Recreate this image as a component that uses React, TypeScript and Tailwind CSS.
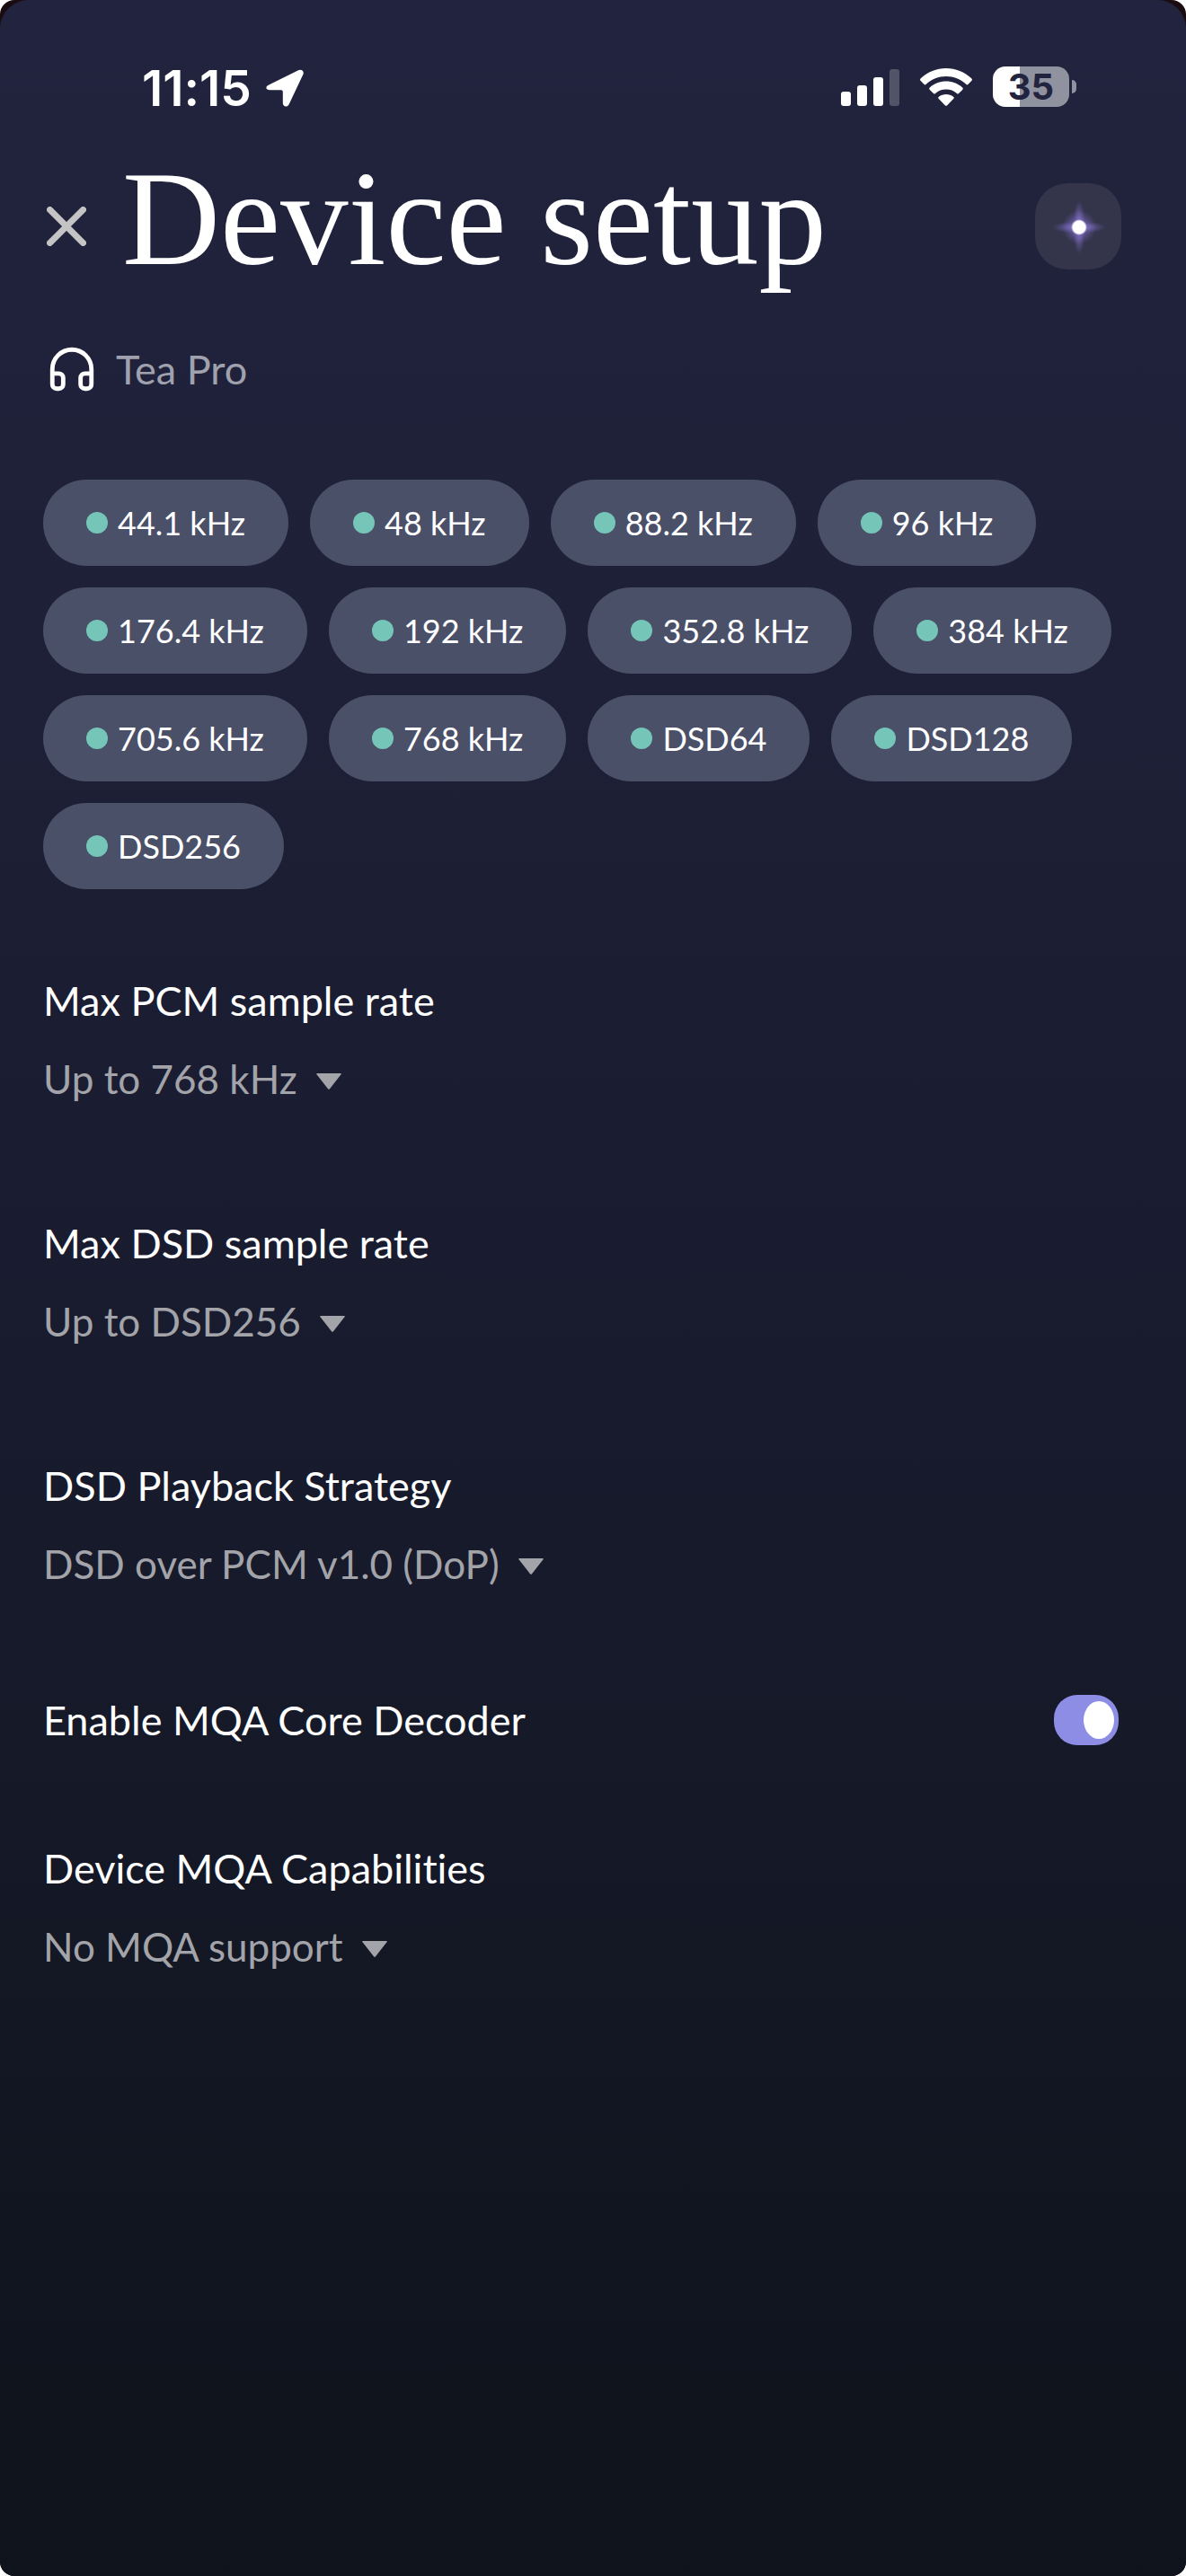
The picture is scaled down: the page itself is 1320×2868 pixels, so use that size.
import { useState } from "react";
import { Headphones } from "lucide-react";

const RATES = [
  "44.1 kHz",
  "48 kHz",
  "88.2 kHz",
  "96 kHz",
  "176.4 kHz",
  "192 kHz",
  "352.8 kHz",
  "384 kHz",
  "705.6 kHz",
  "768 kHz",
  "DSD64",
  "DSD128",
  "DSD256",
];

function StatusBar() {
  return (
    <div className="flex h-[60px] items-center justify-between pr-[122px] pl-[158px] text-white">
      <div className="flex items-center gap-4">
        <span className="font-['Inter',sans-serif] text-[55px] leading-[60px] font-semibold">
          11:15
        </span>
        <svg width="42" height="42" viewBox="0 0 42 42" aria-hidden="true">
          <path
            d="M3.2 17.6 36 1.3C39.6-.5 43 2.4 41.3 6L25.6 39.2C23.8 43 18.8 42 18.8 37.8V25.4C18.8 24 18.2 23.2 16.8 23.2H4.4C-.4 23.2-1 19.6 3.2 17.6Z"
            fill="currentColor"
          />
        </svg>
      </div>
      <div className="flex items-center gap-[23px] pb-[3px]">
        <svg width="65" height="42" viewBox="0 0 65 42" fill="currentColor" role="img" aria-label="Signal">
          <rect x="0" y="26" width="11" height="16" rx="3" />
          <rect x="18" y="19" width="11" height="23" rx="3" />
          <rect x="36" y="10" width="11" height="32" rx="3" />
          <rect x="54" y="1" width="11" height="41" rx="3" opacity="0.22" />
        </svg>
        <svg width="58" height="42" viewBox="0 0 58 42" fill="currentColor" role="img" aria-label="Wi-Fi">
          <path d="M29 0C39.6 0 49.6 4.1 57.2 11.3C58.2 12.3 58.2 13.2 57.3 14.1L53.6 17.8C52.8 18.6 52 18.6 51.2 17.8C45.2 12.2 37.4 9 29 9S12.8 12.2 6.8 17.8C6 18.6 5.2 18.6 4.4 17.8L.7 14.1C-.2 13.2-.2 12.3.8 11.3C8.4 4.1 18.4 0 29 0Z" />
          <path d="M29 14.6C35.8 14.6 42.2 17.1 47.2 21.5C48 22.2 48 23.2 47.2 24L43.3 27.8C42.5 28.6 41.7 28.6 40.9 27.9C37.6 25.1 33.5 23.6 29 23.6S20.4 25.1 17.1 27.9C16.3 28.6 15.5 28.6 14.7 27.8L10.8 24C10 23.2 10 22.2 10.8 21.5C15.8 17.1 22.2 14.6 29 14.6Z" />
          <path d="M29 29C32 29 34.8 30 37.1 31.7C38 32.4 38 33.2 37.2 34L30.2 41.2C29.4 42 28.6 42 27.8 41.2L20.8 34C20 33.2 20 32.4 20.9 31.7C23.2 30 26 29 29 29Z" />
        </svg>
        <div className="flex items-center gap-[3px]">
          <div className="flex h-[45px] w-[85px] items-center justify-center rounded-[14px] bg-linear-to-r from-white from-35% to-[#9092a0] to-35%">
            <span className="font-['Inter',sans-serif] text-[40px] leading-[45px] font-bold text-[#22243f]">
              35
            </span>
          </div>
          <div className="h-[15px] w-[5px] rounded-r-full bg-[#9092a0]" />
        </div>
      </div>
    </div>
  );
}

function Sparkle() {
  return (
    <svg width="96" height="96" viewBox="0 0 96 96" aria-hidden="true">
      <defs>
        <radialGradient id="halo">
          <stop offset="0" stopColor="#8f7bd8" />
          <stop offset="0.5" stopColor="#7464b4" stopOpacity="0.6" />
          <stop offset="1" stopColor="#6a5aa8" stopOpacity="0" />
        </radialGradient>
        <radialGradient id="ray">
          <stop offset="0" stopColor="#8a77d0" />
          <stop offset="0.5" stopColor="#7a69ba" stopOpacity="0.6" />
          <stop offset="1" stopColor="#6a5aa8" stopOpacity="0" />
        </radialGradient>
        <radialGradient id="core">
          <stop offset="0.75" stopColor="#fff" />
          <stop offset="1" stopColor="#fff" stopOpacity="0" />
        </radialGradient>
      </defs>
      <circle cx="49" cy="49" r="19" fill="url(#halo)" />
      <ellipse cx="49" cy="49" rx="30" ry="7" fill="url(#ray)" />
      <ellipse cx="49" cy="49" rx="7" ry="30" fill="url(#ray)" />
      <circle cx="49" cy="49" r="9" fill="url(#core)" />
    </svg>
  );
}

interface SelectFieldProps {
  id: string;
  label: string;
  options: string[];
}

function SelectField({ id, label, options }: SelectFieldProps) {
  return (
    <div className="flex flex-col items-start gap-[27px] text-[45px] leading-[60px]">
      <label htmlFor={id}>{label}</label>
      <div className="relative text-[44px] text-[#a3a4aa]">
        <select
          id={id}
          className="block h-[60px] field-sizing-content cursor-pointer appearance-none bg-transparent pr-[49px] outline-none"
        >
          {options.map((option) => (
            <option key={option}>{option}</option>
          ))}
        </select>
        <svg
          className="pointer-events-none absolute top-6 right-0"
          width="28"
          height="18"
          viewBox="0 0 28 18"
          aria-hidden="true"
        >
          <path d="M1 0H27Q28.4 0 27.5 1.3L15 17.2Q14 18.4 13 17.2L.5 1.3Q-.4 0 1 0Z" fill="currentColor" />
        </svg>
      </div>
    </div>
  );
}

export default function App() {
  const [mqaDecoder, setMqaDecoder] = useState(true);

  return (
    <div className="bg-white">
      <div className="overflow-hidden rounded-2xl bg-[#1a0c10]">
        <main className="min-h-screen rounded-t-[32px] bg-linear-to-b from-[#22243f] via-[#191c2f] to-[#0f131b] pt-[68px] pb-24 font-['Lato',sans-serif] text-white [font-variant-ligatures:none]">
          <StatusBar />

          <div className="px-12">
            <header className="mt-10 flex items-center gap-9 pr-6">
              <button type="button" aria-label="Close" className="flex h-[60px] w-[52px] items-center justify-center text-[#c4c4c4]">
                <svg width="44" height="44" viewBox="0 0 44 44" aria-hidden="true">
                  <path d="M3.5 3.5 40.5 40.5M40.5 3.5 3.5 40.5" stroke="currentColor" strokeWidth="7" strokeLinecap="round" />
                </svg>
              </button>
              <h1 className="flex-1 pb-[18px] font-['Liberation_Serif',serif] text-[151px] leading-[150px] whitespace-nowrap">
                Device setup
              </h1>
              <button type="button" aria-label="Signal path" className="size-24 rounded-[36px] bg-[#34354b]">
                <Sparkle />
              </button>
            </header>

            <div className="mt-[45px] flex items-center gap-5 pl-[3px] text-[45px] leading-[60px]">
              <Headphones size={58} strokeWidth={2} />
              <span className="text-[#a0a1ae]">Tea Pro</span>
            </div>

            <ul className="mt-[93px] flex flex-wrap gap-6">
              {RATES.map((rate) => (
                <li
                  key={rate}
                  className="flex h-24 items-center gap-[11px] rounded-full bg-[#4b5069] px-12 text-[36px] leading-[48px]"
                >
                  <span className="size-6 rounded-full bg-[#76c5b9]" />
                  {rate}
                </li>
              ))}
            </ul>

            <section className="mt-[94px] flex flex-col gap-[123px]">
              <SelectField
                id="max-pcm"
                label="Max PCM sample rate"
                options={["Up to 768 kHz", "Up to 384 kHz", "Up to 192 kHz"]}
              />
              <SelectField
                id="max-dsd"
                label="Max DSD sample rate"
                options={["Up to DSD256", "Up to DSD128", "Up to DSD64"]}
              />
              <SelectField
                id="dsd-strategy"
                label="DSD Playback Strategy"
                options={["DSD over PCM v1.0 (DoP)", "Convert to PCM"]}
              />
            </section>

            <div className="mt-[114px] flex items-center justify-between pr-[27px] text-[45px] leading-[60px]">
              <label htmlFor="mqa-decoder">Enable MQA Core Decoder</label>
              <span className="relative flex">
                <input
                  id="mqa-decoder"
                  type="checkbox"
                  role="switch"
                  checked={mqaDecoder}
                  onChange={(e) => setMqaDecoder(e.target.checked)}
                  className="peer h-14 w-[72px] cursor-pointer appearance-none rounded-[26px] bg-[#4b5069] checked:bg-[#8d8de6]"
                />
                <span className="pointer-events-none absolute top-[7px] left-[6px] h-[42px] w-[34px] rounded-[50%] bg-white peer-checked:left-[33px]" />
              </span>
            </div>

            <section className="mt-[105px]">
              <SelectField
                id="mqa-capabilities"
                label="Device MQA Capabilities"
                options={["No MQA support", "Renderer only", "Decoder and renderer"]}
              />
            </section>
          </div>
        </main>
      </div>
    </div>
  );
}
